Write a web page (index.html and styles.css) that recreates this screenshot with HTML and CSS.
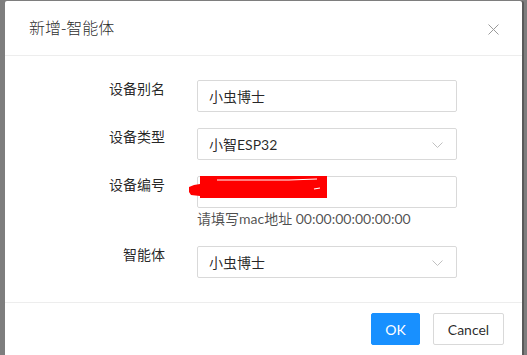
FILE: index.html
```html
<!DOCTYPE html>
<html lang="zh">
<head>
  <meta charset="UTF-8" />
  <title>新增-智能体</title>
  <link rel="stylesheet" href="styles.css">
</head>
<body>
  <div class="modal">
    <div class="modal-header">
      <span class="modal-title">新增-智能体</span>
      <span class="close">
        <svg width="11" height="11" viewBox="0 0 11 11"><path d="M0.5 0.5 L10.5 10.5 M10.5 0.5 L0.5 10.5" stroke="#9a9a9a" stroke-width="1" fill="none"/></svg>
      </span>
    </div>

    <div class="modal-body">
      <div class="form-row">
        <label>设备别名</label>
        <div class="field">
          <div class="input">小虫博士</div>
        </div>
      </div>

      <div class="form-row">
        <label>设备类型</label>
        <div class="field">
          <div class="input select">小智ESP32
            <svg class="arrow" width="11" height="7" viewBox="0 0 11 7"><path d="M0.5 0.5 L5.5 5.5 L10.5 0.5" stroke="#c0c0c0" stroke-width="1" fill="none"/></svg>
          </div>
        </div>
      </div>

      <div class="form-row">
        <label>设备编号</label>
        <div class="field">
          <div class="input redacted">
            <svg class="scribble" width="140" height="24" viewBox="0 0 140 24">
              <path d="M0 11 L5 9 L11 8 L11 0 L138 0 L138 22 L11 22 L11 20 L2 19 L0 16 Z" fill="#ff0000"/>
              <path d="M28 4 L100 4 L128 3" stroke="#fff" stroke-width="1" fill="none"/>
              <path d="M125 13 L131 12" stroke="#fff" stroke-width="1.2" fill="none"/>
            </svg>
          </div>
          <div class="help">请填写mac地址 00:00:00:00:00:00</div>
        </div>
      </div>

      <div class="form-row">
        <label>智能体</label>
        <div class="field">
          <div class="input select">小虫博士
            <svg class="arrow" width="11" height="7" viewBox="0 0 11 7"><path d="M0.5 0.5 L5.5 5.5 L10.5 0.5" stroke="#c0c0c0" stroke-width="1" fill="none"/></svg>
          </div>
        </div>
      </div>
    </div>

    <div class="modal-footer">
      <button class="btn primary">OK</button>
      <button class="btn">Cancel</button>
    </div>
  </div>
</body>
</html>
```

FILE: styles.css
```css
body {
  margin: 0;
  width: 527px;
  height: 355px;
  overflow: hidden;
  background: #7e7e7e;
  font-family: Lato, "Noto Sans CJK SC", sans-serif;
  font-size: 14px;
  color: rgba(0, 0, 0, 0.85);
  padding: 1px 0 0 5px;
  box-sizing: border-box;
}

.modal {
  width: 517px;
  height: 354px;
  overflow: hidden;
  background: #fff;
  border-radius: 2px 2px 0 0;
  box-shadow: 2px 0 0 #5a5a5a;
}

.modal-header {
  height: 54px;
  padding: 0 24px;
  display: flex;
  align-items: center;
  justify-content: space-between;
  border-bottom: 1px solid #ededed;
}

.modal-title {
  font-size: 16px;
  color: rgba(0, 0, 0, 0.85);
  font-family: "Noto Sans CJK SC", sans-serif;
  font-weight: 300;
  padding-bottom: 2px;
}

.close {
  display: flex;
  margin-right: -1px;
  padding-top: 2px;
}

.modal-body {
  padding: 24px 24px 0;
  height: 222px;
  border-bottom: 1px solid #ededed;
}

.form-row {
  display: grid;
  grid-template-columns: 136px 260px;
  column-gap: 32px;
  margin-bottom: 16px;
}

.form-row label {
  text-align: right;
  line-height: 16px;
  font-family: "Noto Sans CJK SC", sans-serif;
  color: rgba(0, 0, 0, 0.85);
}

.input {
  position: relative;
  height: 32px;
  box-sizing: border-box;
  border: 1px solid #d9d9d9;
  border-radius: 2px;
  padding: 0 11px;
  display: flex;
  align-items: center;
}

.select .arrow {
  position: absolute;
  right: 13px;
  top: 13px;
}

.redacted .scribble {
  position: absolute;
  left: -9px;
  top: -1px;
}

.help {
  line-height: 22px;
  color: rgba(0, 0, 0, 0.7);
}

.modal-footer {
  display: flex;
  justify-content: flex-end;
  gap: 13px;
  padding: 10px 18px 0;
}

.btn {
  height: 32px;
  width: 71px;
  padding: 0;
  border: 1px solid #d9d9d9;
  border-radius: 2px;
  background: #fff;
  font-family: Lato, sans-serif;
  font-size: 14px;
  color: rgba(0, 0, 0, 0.85);
}

.btn.primary {
  width: 49px;
  background: #1890ff;
  border-color: #1890ff;
  color: #fff;
}
```
